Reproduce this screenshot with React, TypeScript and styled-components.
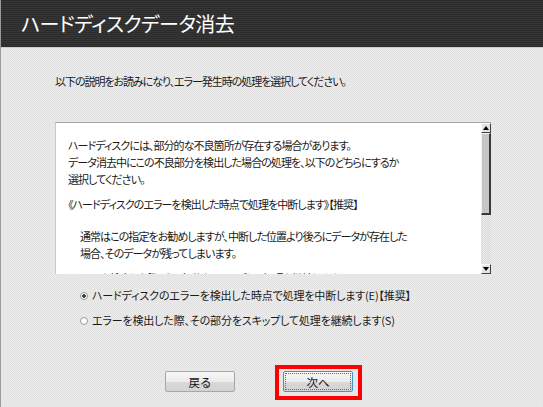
import styled, { createGlobalStyle } from 'styled-components';

const GlobalStyle = createGlobalStyle`
  html, body {
    margin: 0;
    padding: 0;
    background: #e6e6e6;
  }
  body {
    font-family: "Noto Sans CJK JP", "Noto Sans", sans-serif;
    color: #1a1a1a;
  }
`;

const Window = styled.div`
  width: 543px;
  height: 407px;
  display: flex;
  flex-direction: column;
  overflow: hidden;
  background: repeating-conic-gradient(#e1e1e1 0 25%, #ececec 0 50%) 0 0 / 2px 2px;
  border-left: 1px solid #9a9a9a;
  box-sizing: border-box;
`;

const TitleBar = styled.header`
  height: 48px;
  flex: none;
  display: flex;
  align-items: center;
  padding-left: 20px;
  background: repeating-linear-gradient(180deg, #2c2c2c 0 1px, #363636 1px 2px);
  border-bottom: 1px solid #cfcfcf;
  box-sizing: border-box;
`;

const Title = styled.h1`
  margin: 0;
  font-size: 20px;
  font-weight: 400;
  color: #fff;
  font-feature-settings: "palt";
  letter-spacing: -0.5px;
`;

const Content = styled.main`
  padding-left: 54px;
  display: flex;
  flex-direction: column;
`;

const Lead = styled.p`
  margin: 25px 0 0;
  font-size: 11px;
  line-height: 17px;
  letter-spacing: -1.05px;
  font-feature-settings: "palt";
`;

const TextBox = styled.div`
  margin-top: 32px;
  width: 436px;
  height: 152px;
  display: flex;
  background: #fff;
  border-top: 1px solid #a9a9a9;
  border-left: 1px solid #c8c8c8;
  box-sizing: border-box;
`;

const TextBody = styled.div`
  flex: 1;
  overflow: hidden;
  padding: 14px 0 0 12px;
  font-size: 11px;
  line-height: 17px;
  letter-spacing: -0.95px;
  font-feature-settings: "palt";
`;

const Para = styled.p<{ $gap?: number; $indent?: number }>`
  margin: ${p => p.$gap ?? 0}px 0 0 ${p => p.$indent ?? 0}px;
`;

const ScrollBar = styled.div`
  width: 10px;
  flex: none;
  display: flex;
  flex-direction: column;
  background: repeating-conic-gradient(#d4d4d4 0 25%, #f0f0f0 0 50%) 0 0 / 2px 2px;
`;

const ArrowButton = styled.div`
  height: 10px;
  flex: none;
  display: flex;
  align-items: center;
  justify-content: center;
  background: #e4e4e4;
  border: 1px solid #fff;
  border-right-color: #404040;
  border-bottom-color: #404040;
  box-sizing: border-box;
`;

const Thumb = styled.div`
  height: 82px;
  flex: none;
  background: #c6c6c6;
  border: 1px solid #f2f2f2;
  border-right: 2px solid #3a3a3a;
  border-bottom: 2px solid #3a3a3a;
  box-sizing: border-box;
`;

const Track = styled.div`
  flex: 1;
`;

const Options = styled.div`
  margin: 13px 0 0 25px;
  display: flex;
  flex-direction: column;
  gap: 8px;
`;

const Option = styled.label`
  display: flex;
  align-items: center;
  gap: 4px;
  font-size: 11px;
  line-height: 17px;
  letter-spacing: -0.15px;
  font-feature-settings: "palt";
`;

const Radio = styled.span<{ $checked?: boolean }>`
  width: 6px;
  height: 6px;
  border-radius: 50%;
  border: 1px solid #9a9a9a;
  background: ${p => (p.$checked ? 'radial-gradient(circle, #333 0 1.5px, #fff 2px)' : '#fff')};
  flex: none;
`;

const Buttons = styled.div`
  margin: 42px 0 0 110px;
  display: flex;
  gap: 48px;
`;

/* red frame drawn around the focused button */
const Focus = styled.span`
  position: relative;
  display: inline-flex;
  &::after {
    content: '';
    position: absolute;
    inset: -6px -9px -8px -8px;
    border: 4px solid #ff0000;
  }
`;

const Button = styled.button<{ $focused?: boolean }>`
  width: 70px;
  height: 21px;
  padding: 0;
  font-family: inherit;
  font-size: 11.5px;
  color: #111;
  border-radius: 2px;
  border: 1px solid ${p => (p.$focused ? '#3d97c8' : '#a7a7a7')};
  background: linear-gradient(180deg, #f7f7f7 0%, #ececec 50%, #d9d9d9 51%, #d2d2d2 100%);
  outline: ${p => (p.$focused ? '1px dotted #6a6a6a' : 'none')};
  outline-offset: -3px;
`;

const UpArrow = () => (
  <svg width="6" height="4" viewBox="0 0 6 4">
    <path d="M3 0 L6 4 L0 4 Z" fill="#000" />
  </svg>
);

const DownArrow = () => (
  <svg width="6" height="4" viewBox="0 0 6 4">
    <path d="M0 0 L6 0 L3 4 Z" fill="#000" />
  </svg>
);

export default function App() {
  return (
    <>
      <GlobalStyle />
      <Window>
        <TitleBar>
          <Title>ハードディスクデータ消去</Title>
        </TitleBar>
        <Content>
          <Lead>以下の説明をお読みになり、エラー発生時の処理を選択してください。</Lead>
          <TextBox>
            <TextBody>
              <Para>
                ハードディスクには、部分的な不良箇所が存在する場合があります。
                <br />
                データ消去中にこの不良部分を検出した場合の処理を、以下のどちらにするか
                <br />
                選択してください。
              </Para>
              <Para $gap={8}>《ハードディスクのエラーを検出した時点で処理を中断します》【推奨】</Para>
              <Para $gap={15} $indent={12}>
                通常はこの指定をお勧めしますが、中断した位置より後ろにデータが存在した
                <br />
                場合、そのデータが残ってしまいます。
              </Para>
              <Para $gap={8}>《エラーを検出した際、その部分をスキップして処理を継続します》</Para>
              <Para $gap={16} $indent={12}>
                不良箇所を除いて、最後までデータを消去します。
              </Para>
            </TextBody>
            <ScrollBar>
              <ArrowButton>
                <UpArrow />
              </ArrowButton>
              <Thumb />
              <Track />
              <ArrowButton>
                <DownArrow />
              </ArrowButton>
            </ScrollBar>
          </TextBox>
          <Options>
            <Option>
              <Radio $checked />
              ハードディスクのエラーを検出した時点で処理を中断します(E)【推奨】
            </Option>
            <Option>
              <Radio />
              エラーを検出した際、その部分をスキップして処理を継続します(S)
            </Option>
          </Options>
          <Buttons>
            <Button>戻る</Button>
            <Focus>
              <Button $focused>次へ</Button>
            </Focus>
          </Buttons>
        </Content>
      </Window>
    </>
  );
}
